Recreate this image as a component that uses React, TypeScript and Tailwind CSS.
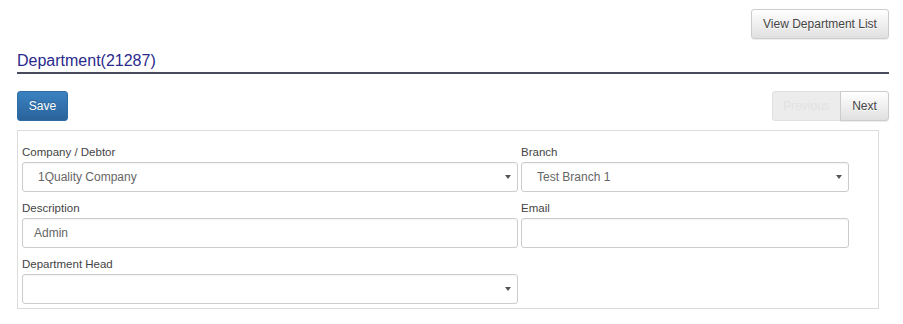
import React from "react";

const btnDefault =
  "h-[30px] px-[10px] text-[12px] text-[#333] border border-[#ccc] bg-gradient-to-b from-white to-[#e0e0e0] shadow-[inset_0_1px_0_rgba(255,255,255,0.15),0_1px_1px_rgba(0,0,0,0.075)] [text-shadow:0_1px_0_#fff]";

function Caret() {
  return (
    <svg width="6" height="4" viewBox="0 0 6 4" className="absolute right-[6px] top-[12px]">
      <path d="M0 0 L6 0 L3 4 Z" fill="#555" />
    </svg>
  );
}

function Field({
  label,
  value,
  select,
  width,
  indent,
}: {
  label: string;
  value?: string;
  select?: boolean;
  width: string;
  indent?: string;
}) {
  return (
    <div className={width}>
      <div className="text-[11.5px] leading-[16px] text-[#444] mb-[2px]">{label}</div>
      <div className="relative h-[30px] border border-[#ccc] rounded-[3px] bg-white shadow-[inset_0_1px_1px_rgba(0,0,0,0.04)]">
        <div className={`${indent ?? "pl-[15px]"} text-[12px] leading-[28px] text-[#666]`}>{value}</div>
        {select && <Caret />}
      </div>
    </div>
  );
}

export default function App() {
  return (
    <div className="w-[903px] h-[324px] bg-white font-['Liberation_Sans',Arial,sans-serif] overflow-hidden">
      <div className="pl-[17px] pr-[14px]">
        {/* Top action */}
        <div className="flex justify-end pt-[9px]">
          <button className={`${btnDefault} rounded-[3px] w-[138px] text-[#444]`}>View Department List</button>
        </div>

        {/* Heading */}
        <div className="mt-[11px] border-b-2 border-[#4a4a5e]">
          <h2 className="text-[16px] leading-[22px] text-[#2a2a8c]">Department(21287)</h2>
        </div>

        {/* Save + paging */}
        <div className="mt-[17px] flex justify-between">
          <button className="h-[30px] w-[51px] rounded-[3px] border border-[#2e6da4] bg-gradient-to-b from-[#3a82c2] to-[#2a639a] text-[12px] text-white [text-shadow:0_-1px_0_rgba(0,0,0,0.2)]">
            Save
          </button>
          <div className="flex">
            <button className="h-[30px] w-[69px] rounded-l-[3px] border border-[#e0e0e0] bg-[#ececec] text-[12px] text-[#e2e2e2]">
              Previous
            </button>
            <button className={`${btnDefault} -ml-px rounded-r-[3px] w-[49px] text-[#444]`}>Next</button>
          </div>
        </div>

        {/* Form panel */}
        <div className="mt-[9px] w-[862px] border border-[#dcdcdc] pt-[13px] pl-[4px] pb-[4px]">
          <div className="flex gap-[3px]">
            <Field label="Company / Debtor" value="1Quality Company" select width="w-[496px]" />
            <Field label="Branch" value="Test Branch 1" select width="w-[328px]" />
          </div>
          <div className="flex gap-[3px] mt-[8px]">
            <Field label="Description" value="Admin" width="w-[496px]" indent="pl-[11px]" />
            <Field label="Email" width="w-[328px]" />
          </div>
          <div className="flex mt-[8px]">
            <Field label="Department Head" select width="w-[496px]" />
          </div>
        </div>
      </div>
    </div>
  );
}
